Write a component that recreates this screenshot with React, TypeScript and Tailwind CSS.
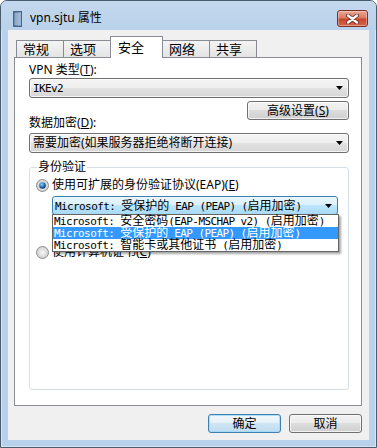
import React from 'react'

const ui = "font-['Noto_Sans','Noto_Sans_CJK_SC',sans-serif]"

function Sim({ text }: { text: string }) {
  // SimSun-like: half-width ascii, full-width CJK
  const parts = text.split(/([\u0000-\u007f]+)/).filter(Boolean)
  return (
    <span className="whitespace-pre font-['Noto_Sans_CJK_SC',sans-serif]">
      {parts.map((p, i) =>
        /^[\u0000-\u007f]+$/.test(p) ? (
          <span key={i} className="font-['DejaVu_Sans_Mono',monospace] text-[11px] tracking-[-0.6px]">{p}</span>
        ) : (
          <span key={i} className="text-[12px]">{p}</span>
        )
      )}
    </span>
  )
}

function Arrow() {
  return (
    <svg width="7" height="4" viewBox="0 0 7 4" className="flex-shrink-0">
      <path d="M0 0h7L3.5 4z" fill="#000" />
    </svg>
  )
}

function Radio({ checked }: { checked?: boolean }) {
  return (
    <svg width="13" height="13" viewBox="0 0 13 13" className="flex-shrink-0">
      <defs>
        <radialGradient id="rg" cx="0.5" cy="0.5" r="0.5">
          <stop offset="0" stopColor="#f6f6f6" />
          <stop offset="1" stopColor="#cfcfcf" />
        </radialGradient>
        <radialGradient id="rb" cx="0.4" cy="0.35" r="0.6">
          <stop offset="0" stopColor="#9ad6fa" />
          <stop offset="0.6" stopColor="#2b79b8" />
          <stop offset="1" stopColor="#0f3f73" />
        </radialGradient>
      </defs>
      <circle cx="6.5" cy="6.5" r="6" fill="url(#rg)" stroke="#8e8f8f" />
      {checked && <circle cx="6.5" cy="6.5" r="3.3" fill="url(#rb)" />}
    </svg>
  )
}

function Combo({ children, w = 'w-[320px]' }: { children: React.ReactNode; w?: string }) {
  return (
    <div className={`${w} h-[20px] flex items-center justify-between pl-[3px] pr-[5px] border border-[#707070] rounded-[3px] bg-[linear-gradient(#f4f4f4_0%,#eeeeee_50%,#e2e2e2_50%,#d6d6d6_100%)] shadow-[inset_0_0_0_1px_rgba(255,255,255,0.7)]`}>
      <div className="leading-[16px]">{children}</div>
      <Arrow />
    </div>
  )
}

function Tab({ label, active }: { label: string; active?: boolean }) {
  if (active)
    return (
      <div className="relative z-10 -ml-px w-[53px] h-[22px] -mb-px bg-white border border-b-0 border-[#898c95] pl-[7px] pt-[2px] text-[13px] leading-[16px]">
        {label}
      </div>
    )
  return (
    <div className="-ml-px first:ml-0 w-[48px] h-[17px] flex items-center bg-[linear-gradient(#f4f4f4,#e4e4e4)] border border-b-0 border-[#898c95] pl-[6px] text-[13px] leading-[16px]">
      {label}
    </div>
  )
}

export default function App() {
  return (
    <div className={`${ui} w-[377px] h-[448px] flex flex-col bg-[#b9d1ea] border border-[#4b5b6e] rounded-t-[7px] overflow-hidden text-[12px] text-black shadow-[inset_0_0_0_1px_rgba(255,255,255,0.45)]`}>
      {/* title bar */}
      <div className="h-[29px] flex items-start bg-[linear-gradient(#c4d8ee,#b9d1ea)]">
        <svg width="9" height="16" viewBox="0 0 9 16" className="ml-[12px] mt-[10px]">
          <defs>
            <linearGradient id="ic" x1="0" x2="1">
              <stop offset="0" stopColor="#4f709a" />
              <stop offset="1" stopColor="#8faccf" />
            </linearGradient>
          </defs>
          <rect x="0.5" y="0.5" width="8" height="15" fill="url(#ic)" stroke="#48648a" />
          {[3, 5, 7, 9, 11, 13].map(y => (
            <line key={y} x1="1.5" x2="7.5" y1={y} y2={y} stroke="#dbe7f5" strokeWidth="0.8" />
          ))}
        </svg>
        <span className="ml-[8px] mt-[9px] leading-[16px] text-[12px]">vpn.sjtu 属性</span>
        <div className="ml-auto mt-[9px] mr-[8px] w-[31px] h-[17px] flex items-center justify-center rounded-[3px] border border-[#7c3023] bg-[linear-gradient(#eaa792_0%,#dd7c63_45%,#c8452b_55%,#d4664a_100%)] shadow-[inset_0_0_0_1px_rgba(255,255,255,0.35)]">
          <svg width="13" height="10" viewBox="0 0 13 10">
            <path d="M2 1.5L11 8.5M11 1.5L2 8.5" stroke="#6b2a20" strokeWidth="4" strokeLinecap="round" />
            <path d="M2 1.5L11 8.5M11 1.5L2 8.5" stroke="#fff" strokeWidth="2.3" strokeLinecap="round" />
          </svg>
        </div>
      </div>

      {/* client area */}
      <div className="flex-1 mx-[7px] mb-[7px] bg-[#f0f0f0] flex flex-col">
        <div className="mt-[6px] ml-[8px] h-[21px] flex items-end">
          <Tab label="常规" />
          <Tab label="选项" />
          <Tab label="安全" active />
          <Tab label="网络" />
          <Tab label="共享" />
        </div>

        <div className="ml-[6px] mr-[7px] h-[349px] bg-white border border-[#898c95] flex flex-col pl-[14px]">
          <div className="mt-[4px] leading-[16px]">
            VPN 类型(<span className="underline">T</span>):
          </div>
          <Combo>
            <Sim text="IKEv2" />
          </Combo>
          <div className="w-[320px] flex justify-end mt-[3px]">
            <div className="w-[102px] h-[19px] flex items-center justify-center border border-[#707070] rounded-[3px] bg-[linear-gradient(#f2f2f2_0%,#ebebeb_50%,#dddddd_50%,#cfcfcf_100%)] shadow-[inset_0_0_0_1px_rgba(255,255,255,0.7)] leading-[16px]">
              高级设置(<span className="underline">S</span>)
            </div>
          </div>
          <div className="-mt-[5px] leading-[16px]">
            数据加密(<span className="underline">D</span>):
          </div>
          <div className="mt-[2px]">
            <Combo>需要加密(如果服务器拒绝将断开连接)</Combo>
          </div>

          {/* group box */}
          <div className="relative mt-[14px] w-[320px] h-[223px] border border-[#d5dfe5] rounded-[3px]">
            <span className="absolute left-[7px] -top-[9px] px-[1px] bg-white leading-[16px]">身份验证</span>
            <div className="mt-[9px] pl-[6px] h-[16px] flex items-center gap-[3px]">
              <Radio checked />
              <span className="leading-[16px]">
                使用可扩展的身份验证协议(EAP)(<span className="underline">E</span>)
              </span>
            </div>
            <div className="relative ml-[22px] mt-[3px] w-[286px]">
              <div className="h-[19px] flex items-center justify-between pl-[2px] pr-[5px] border border-[#3c7fb1] rounded-[3px] bg-[linear-gradient(#eaf6fd_0%,#d9f0fc_50%,#bee6fd_50%,#a7d9f5_100%)]">
                <div className="leading-[16px]">
                  <Sim text="Microsoft: 受保护的 EAP (PEAP) (启用加密)" />
                </div>
                <Arrow />
              </div>
              <div className="absolute z-20 left-0 top-[18px] w-[287px] bg-white border border-[#646464] shadow-[2px_2px_2px_rgba(0,0,0,0.35)]">
                <div className="h-[12px] leading-[12px] pl-[1px] flex items-center">
                  <Sim text="Microsoft: 安全密码(EAP-MSCHAP v2) (启用加密)" />
                </div>
                <div className="h-[12px] leading-[12px] pl-[1px] flex items-center bg-[#3399ff] text-white">
                  <Sim text="Microsoft: 受保护的 EAP (PEAP) (启用加密)" />
                </div>
                <div className="h-[12px] leading-[12px] pl-[1px] flex items-center">
                  <Sim text="Microsoft: 智能卡或其他证书 (启用加密)" />
                </div>
              </div>
            </div>
            <div className="mt-[29px] pl-[6px] h-[16px] flex items-center gap-[3px]">
              <Radio />
              <span className="leading-[16px]">
                使用计算机证书(<span className="underline">C</span>)
              </span>
            </div>
          </div>
        </div>

        {/* buttons */}
        <div className="mt-[8px] mr-[7px] flex justify-end gap-[8px]">
          <div className="w-[73px] h-[19px] flex items-center justify-center border border-[#3c7fb1] rounded-[3px] bg-[linear-gradient(#f2f8fc_0%,#e4f0f8_50%,#cfe5f4_50%,#bfdcef_100%)] shadow-[inset_0_0_0_1px_rgba(160,215,245,0.8)] leading-[16px]">
            确定
          </div>
          <div className="w-[73px] h-[19px] flex items-center justify-center border border-[#707070] rounded-[3px] bg-[linear-gradient(#f2f2f2_0%,#ebebeb_50%,#dddddd_50%,#cfcfcf_100%)] shadow-[inset_0_0_0_1px_rgba(255,255,255,0.7)] leading-[16px]">
            取消
          </div>
        </div>
      </div>
    </div>
  )
}
